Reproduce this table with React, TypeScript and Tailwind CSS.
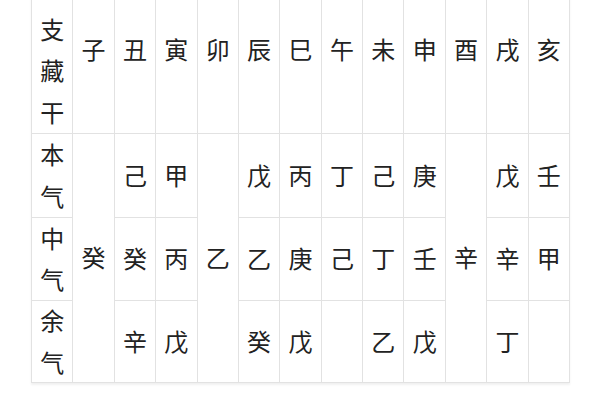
import React from "react";

type Cell = { t: string; col: number; row: number; span?: number };

const headers = ["子", "丑", "寅", "卯", "辰", "巳", "午", "未", "申", "酉", "戌", "亥"];

const body: (string | null)[][] = [
  ["癸", null, null],
  ["己", "癸", "辛"],
  ["甲", "丙", "戊"],
  ["乙", null, null],
  ["戊", "乙", "癸"],
  ["丙", "庚", "戊"],
  ["丁", "己", ""],
  ["己", "丁", "乙"],
  ["庚", "壬", "戊"],
  ["辛", null, null],
  ["戊", "辛", "丁"],
  ["壬", "甲", ""],
];

const spanCols = new Set([0, 3, 9]);

export default function App() {
  const cells: Cell[] = [];
  headers.forEach((h, i) => cells.push({ t: h, col: i + 2, row: 1 }));
  body.forEach((vals, i) => {
    if (spanCols.has(i)) {
      cells.push({ t: vals[0] as string, col: i + 2, row: 2, span: 3 });
    } else {
      vals.forEach((v, r) => cells.push({ t: v ?? "", col: i + 2, row: r + 2 }));
    }
  });

  const side = ["本气", "中气", "余气"];

  return (
    <div
      className="w-[600px] h-[400px] overflow-hidden bg-white pl-[31px]"
      style={{ fontFamily: '"Noto Sans CJK SC", "Noto Sans", sans-serif' }}
    >
      <div className="-mt-[34px] w-[539px] grid grid-cols-[repeat(13,minmax(0,1fr))] grid-rows-[167px_84px_83px_82px] border-t border-l border-[#e2e2e2] text-[24px] leading-[41.5px] text-[#222] shadow-[0_2px_2px_rgba(0,0,0,0.06)]">
        <div className="col-start-1 row-start-1 border-r border-b border-[#e2e2e2] bg-white flex items-center justify-center text-center">
          <span className="block w-[26px] -translate-y-[1px]">地支藏干</span>
        </div>
        {side.map((s, i) => (
          <div
            key={s + i}
            className="col-start-1 border-r border-b border-[#e2e2e2] bg-white flex items-center justify-center text-center"
            style={{ gridRowStart: i + 2 }}
          >
            <span className="block w-[26px] -translate-y-[1px]">{s}</span>
          </div>
        ))}
        {cells.map((c, i) => (
          <div
            key={i}
            className="border-r border-b border-[#e2e2e2] bg-white flex items-center justify-center"
            style={{
              gridColumnStart: c.col,
              gridRowStart: c.row,
              gridRowEnd: c.span ? `span ${c.span}` : undefined,
            }}
          >
            <span className="-translate-y-[1px]">{c.t}</span>
          </div>
        ))}
      </div>
    </div>
  );
}
